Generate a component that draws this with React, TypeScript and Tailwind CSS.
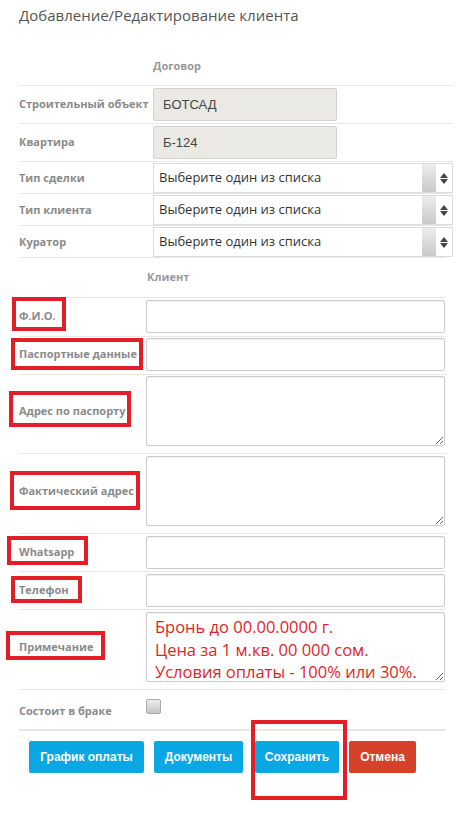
import type { ReactNode } from "react";

const sans = "font-['Open_Sans',sans-serif]";

function Mark({ cls }: { cls: string }) {
  return <span className={`pointer-events-none absolute border-[4px] border-[#e31e26] ${cls}`} />;
}

function Label({ children, mark }: { children: ReactNode; mark?: string }) {
  return (
    <span className="relative leading-[15px] whitespace-nowrap">
      {children}
      {mark && <Mark cls={mark} />}
    </span>
  );
}

function SelectBox() {
  return (
    <div className="flex h-[30px] w-[300px] items-stretch border border-[#dcdcdc] bg-white font-normal">
      <div className="flex flex-1 items-center pl-[5px] text-[13px] text-[#333]">Выберите один из списка</div>
      <div className="w-[14px] bg-gradient-to-b from-[#ededed] to-[#c9c9c9]" />
      <div className="flex w-[16px] flex-col items-center justify-center gap-[1px] text-[#444]">
        <svg width="8" height="5" viewBox="0 0 8 5">
          <path d="M0 5 L4 0 L8 5 Z" fill="currentColor" />
        </svg>
        <svg width="8" height="5" viewBox="0 0 8 5">
          <path d="M0 0 L8 0 L4 5 Z" fill="currentColor" />
        </svg>
      </div>
    </div>
  );
}

const inputCls =
  "block w-[299px] rounded-[2px] border border-[#cccccc] bg-white shadow-[inset_0_1px_1px_rgba(0,0,0,0.07)] outline-none";

export default function App() {
  const contract = [
    { label: "Строительный объект", value: "БОТСАД" },
    { label: "Квартира", value: "Б-124" },
  ];

  const client = [
    { label: "Ф.И.О.", kind: "input", row: "pt-[2px] pb-[3px]", mark: "left-[-7px] top-[-11px] w-[54px] h-[34px]" },
    { label: "Паспортные данные", kind: "input", row: "pt-[1px] pb-[3px]", mark: "left-[-8px] top-[-8px] w-[132px] h-[32px]" },
    { label: "Адрес по паспорту", kind: "area", row: "pt-[1px] pb-[7px]", mark: "left-[-10px] top-[-12px] w-[122px] h-[36px]" },
    { label: "Фактический адрес", kind: "area", row: "pt-[2px] pb-[7px]", mark: "left-[-9px] top-[-12px] w-[130px] h-[39px]" },
    { label: "Whatsapp", kind: "input", row: "pt-[2px] pb-[2px]", mark: "left-[-12px] top-[-8px] w-[81px] h-[29px]" },
    { label: "Телефон", kind: "input", row: "pt-[2px] pb-[2px]", mark: "left-[-8px] top-[-6px] w-[71px] h-[27px]" },
  ];

  return (
    <div className={`min-h-[815px] w-[469px] bg-white ${sans}`}>
      <div className="px-[19px] pt-[4px]">
        <h1 className="text-[15px] leading-[22px] font-normal text-[#555]">Добавление/Редактирование клиента</h1>

        <div className="mt-[21px] w-[434px] text-[11px] font-bold text-[#8a8a8a]">
          <div className="flex h-[38px] items-center pl-[134px] text-[#999]">Договор</div>

          {contract.map((c) => (
            <div key={c.label} className="flex items-center border-t border-[#e8e8e8] py-[2px]">
              <div className="w-[134px] shrink-0">
                <Label>{c.label}</Label>
              </div>
              <div className="flex h-[33px] w-[184px] items-center rounded-[2px] border border-[#d2d2d2] bg-[#ebe9e4] pl-[9px] font-['Liberation_Sans',sans-serif] text-[13px] font-normal text-[#444]">
                {c.value}
              </div>
            </div>
          ))}

          {["Тип сделки", "Тип клиента", "Куратор"].map((l) => (
            <div key={l} className="flex items-center border-t border-[#e8e8e8] pt-[1px]">
              <div className="w-[134px] shrink-0">
                <Label>{l}</Label>
              </div>
              <SelectBox />
            </div>
          ))}
        </div>

        <div className="w-[427px] text-[11px] font-bold text-[#8a8a8a]">
          <div className="flex h-[40px] items-center border-t border-[#e8e8e8] pl-[128px] text-[#999]">Клиент</div>

          {client.map((c) => (
            <div key={c.label} className={`flex items-center border-t border-[#e8e8e8] ${c.row}`}>
              <div className="w-[127px] shrink-0">
                <Label mark={c.mark}>{c.label}</Label>
              </div>
              {c.kind === "input" ? (
                <input className={`${inputCls} h-[33px]`} />
              ) : (
                <textarea className={`${inputCls} h-[70px]`} />
              )}
            </div>
          ))}

          <div className="flex items-center border-t border-[#e8e8e8] pt-[2px] pb-[7px]">
            <div className="w-[127px] shrink-0">
              <Label mark="left-[-13px] top-[-8px] w-[99px] h-[29px]">Примечание</Label>
            </div>
            <textarea
              className={`${inputCls} h-[70px] resize-y overflow-hidden px-[8px] pt-[3px] text-[16.5px] leading-[22.5px] font-normal text-[#e21f26]`}
              defaultValue={"Бронь до 00.00.0000 г.\nЦена за 1 м.кв. 00 000 сом.\nУсловия оплаты - 100% или 30%."}
            />
          </div>

          <div className="flex h-[40px] border-t border-[#e8e8e8]">
            <div className="flex w-[127px] shrink-0 items-center pt-[2px]">
              <Label>Состоит в браке</Label>
            </div>
            <div className="pt-[9px]">
              <div className="h-[15px] w-[15px] rounded-[2px] border border-[#a8a8a8] bg-gradient-to-b from-[#ececec] to-[#c6c6c6]" />
            </div>
          </div>

          <div className="h-[2px] bg-[#e8e8e8]" />
        </div>

        <div className="mt-[10px] flex pl-[10px] font-['Liberation_Sans',sans-serif] text-[12px] font-bold text-white">
          <button className="h-[32px] w-[115px] rounded-[2px] bg-[#0aa7e5]">График оплаты</button>
          <button className="ml-[10px] h-[32px] w-[89px] rounded-[2px] bg-[#0aa7e5]">Документы</button>
          <div className="relative ml-[12px]">
            <button className="h-[32px] w-[84px] rounded-[2px] bg-[#0aa7e5]">Сохранить</button>
            <span className="pointer-events-none absolute left-[-4px] top-[-21px] h-[80px] w-[96px] border-[4px] border-[#e31e26]" />
          </div>
          <button className="ml-[10px] h-[32px] w-[67px] rounded-[2px] bg-[#d5412a]">Отмена</button>
        </div>
      </div>
    </div>
  );
}
